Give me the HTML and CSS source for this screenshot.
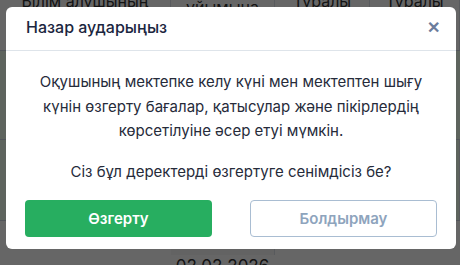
FILE: index.html
```html
<!DOCTYPE html>
<html lang="kk">
<head>
    <meta charset="UTF-8">
    <meta name="viewport" content="width=device-width, initial-scale=1.0">
    <title>Назар аударыңыз</title>
    <link rel="stylesheet" href="styles.css">
</head>
<body>
    <div class="tabel">
        <div class="qatar bas">
            <div class="uya u1">Білім алушының</div>
            <div class="uya u2">ұйымына</div>
            <div class="uya u3">Туралы</div>
            <div class="uya u4">Туралы</div>
        </div>
        <div class="qatar jasyl"></div>
        <div class="qatar jasyl">
            <div class="uya u1"></div>
            <div class="uya u2 kun">02.02.2026</div>
            <div class="uya u3"></div>
            <div class="uya u4"></div>
        </div>
    </div>

    <div class="perde"></div>

    <div class="modal">
        <div class="modal-bas">
            <h3>Назар аударыңыз</h3>
            <span class="jabu">&#x2715;</span>
        </div>
        <div class="modal-dene">
            <p>Оқушының мектепке келу күні мен мектептен шығу күнін өзгерту бағалар, қатысулар және пікірлердің көрсетілуіне әсер етуі мүмкін.</p>
            <p>Сіз бұл деректерді өзгертуге сенімдісіз бе?</p>
        </div>
        <div class="modal-ayaq">
            <button class="btn btn-jasyl">Өзгерту</button>
            <button class="btn btn-bos">Болдырмау</button>
        </div>
    </div>
</body>
</html>
```

FILE: styles.css
```css
body {
    margin: 0;
    font-family: Inter, "Noto Sans", sans-serif;
    background-color: #fff;
    width: 460px;
    height: 265px;
    overflow: hidden;
}
.tabel {
    width: 460px;
}
.qatar {
    display: flex;
    border-bottom: 1px solid #ccd5e0;
}
.bas {
    height: 50px;
    background-color: #ffffff;
}
.jasyl {
    background-color: #ecfbec;
    height: 88px;
}
.jasyl:last-child {
    height: 80px;
}
.uya {
    border-right: 1px solid #dde2e8;
    font-size: 16px;
    color: #333;
    text-align: center;
    line-height: 22px;
}
.u1 { width: 170px; }
.u2 { width: 103px; padding-top: 2px; }
.u3 { width: 94px; }
.u4 { flex: 1; }
.bas .uya {
    margin-top: -10px;
}
.bas .u2 {
    margin-top: -6px;
}
.kun {
    background-color: #f7f7f7;
    padding-top: 115px;
    font-size: 17px;
}
.perde {
    position: fixed;
    inset: 0;
    background: rgba(0, 0, 0, 0.6);
}
.modal {
    position: absolute;
    left: 6px;
    top: 7px;
    width: 450px;
    height: 242px;
    background: #fff;
    border-radius: 6px;
}
.modal-bas {
    display: flex;
    align-items: center;
    justify-content: space-between;
    height: 40px;
    padding: 0 16px 3px 20px;
    border-bottom: 1px solid #dee4ea;
}
.modal-bas h3 {
    margin: 0;
    font-size: 16px;
    font-weight: 500;
    color: #1b2640;
}
.jabu {
    color: #6c7d9c;
    font-size: 16px;
    font-weight: bold;
}
.modal-dene {
    padding: 19px 20px 0;
    text-align: center;
    color: #262b3a;
    font-size: 15px;
    line-height: 24.5px;
}
.modal-dene p {
    margin: 0 0 16px;
}
.modal-ayaq {
    display: flex;
    justify-content: space-between;
    padding: 0 19px;
    margin-top: 3px;
}
.btn {
    width: 187px;
    height: 37px;
    border-radius: 4px;
    font-family: inherit;
    font-size: 15px;
    font-weight: 600;
    cursor: pointer;
}
.btn-jasyl {
    background-color: #27ae60;
    border: none;
    color: #fff;
}
.btn-bos {
    background-color: #fff;
    border: 1px solid #a9bdd2;
    color: #8ea4bd;
}
```
